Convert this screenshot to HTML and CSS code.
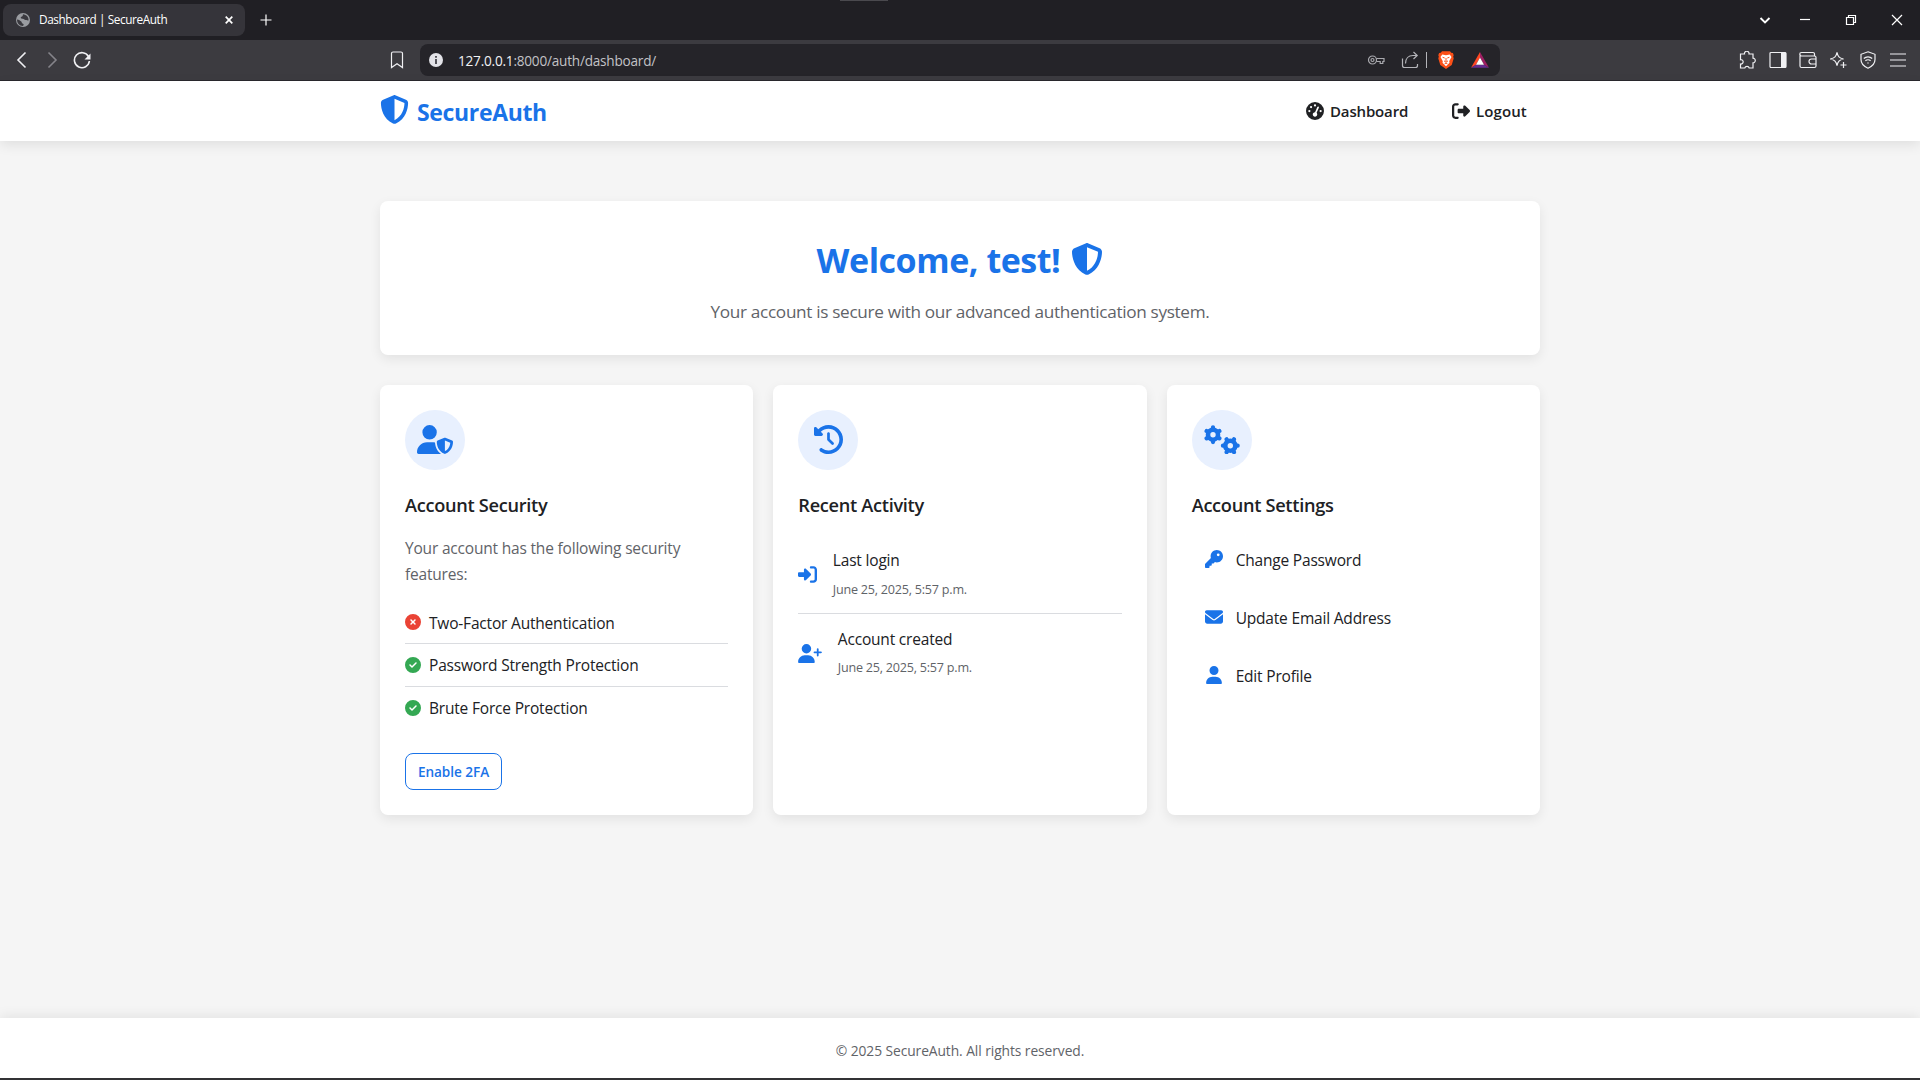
FILE: index.html
```html
<!DOCTYPE html>
<html lang="en">
<head>
<meta charset="utf-8">
<title>Dashboard | SecureAuth</title>
<link rel="stylesheet" href="styles.css">
</head>
<body>
<svg class="sprite" aria-hidden="true">
  <symbol id="shield" viewBox="0 0 512 512"><path d="M256 0c4.600 0 9.200 1 13.400 2.900L457.700 82.800c22 9.300 38.400 31 38.300 57.200c-.5 99.200-41.300 280.700-213.600 363.200c-16.700 8-36.100 8-52.800 0C57.300 420.700 16.500 239.200 16 140c-.1-26.200 16.300-47.900 38.300-57.200L242.700 2.900C246.800 1 251.400 0 256 0zm0 66.800V444.800C394 378 431.100 230.100 432 141.400L256 66.800z"/></symbol>
  <symbol id="gauge" viewBox="0 0 512 512"><path d="M0 256a256 256 0 1 1 512 0A256 256 0 1 1 0 256zM288 96a32 32 0 1 0 -64 0 32 32 0 1 0 64 0zM256 416c35.300 0 64-28.700 64-64c0-17.400-6.900-33.100-18.100-44.600L366 161.700c5.300-12.100-.2-26.300-12.300-31.600s-26.300 .2-31.600 12.300L257.900 288c-.6 0-1.300 0-1.900 0c-35.300 0-64 28.700-64 64s28.700 64 64 64zM176 144a32 32 0 1 0 -64 0 32 32 0 1 0 64 0zM96 288a32 32 0 1 0 0-64 32 32 0 1 0 0 64zm352-32a32 32 0 1 0 -64 0 32 32 0 1 0 64 0z"/></symbol>
  <symbol id="logout" viewBox="0 0 512 512"><path d="M377.900 105.900L500.700 228.700c7.200 7.200 11.300 17.100 11.300 27.300s-4.100 20.100-11.300 27.300L377.900 406.100c-6.400 6.400-15 9.900-24 9.900c-18.700 0-33.900-15.200-33.900-33.900l0-62.100-128 0c-17.700 0-32-14.300-32-32l0-64c0-17.700 14.300-32 32-32l128 0 0-62.100c0-18.700 15.200-33.900 33.900-33.900c9 0 17.600 3.600 24 9.900zM160 96L96 96c-17.700 0-32 14.300-32 32l0 256c0 17.700 14.300 32 32 32l64 0c17.700 0 32 14.300 32 32s-14.300 32-32 32l-64 0c-53 0-96-43-96-96L0 128C0 75 43 32 96 32l64 0c17.700 0 32 14.300 32 32s-14.300 32-32 32z"/></symbol>
  <symbol id="login" viewBox="0 0 512 512"><path d="M217.900 105.900L340.700 228.700c7.200 7.200 11.300 17.100 11.300 27.300s-4.100 20.100-11.300 27.300L217.900 406.100c-6.400 6.400-15 9.900-24 9.900c-18.700 0-33.900-15.200-33.900-33.900l0-62.100L32 320c-17.700 0-32-14.300-32-32l0-64c0-17.700 14.300-32 32-32l128 0 0-62.100c0-18.700 15.200-33.900 33.900-33.900c9 0 17.600 3.600 24 9.900zM352 416l64 0c17.700 0 32-14.300 32-32l0-256c0-17.700-14.300-32-32-32l-64 0c-17.700 0-32-14.300-32-32s14.300-32 32-32l64 0c53 0 96 43 96 96l0 256c0 53-43 96-96 96l-64 0c-17.700 0-32-14.300-32-32s14.300-32 32-32z"/></symbol>
  <symbol id="user-shield" viewBox="0 0 640 512"><path d="M224 256A128 128 0 1 0 224 0a128 128 0 1 0 0 256zm-45.700 48C79.800 304 0 383.800 0 482.300C0 498.700 13.300 512 29.700 512l388.600 0c1.800 0 3.500-.2 5.300-.5c-76.300-55.100-99.800-141-103.100-200.200c-16.100-4.800-33.100-7.300-50.700-7.300l-91.400 0zm308.800-78.300l-120 48C358 277.400 352 286.200 352 296c0 63.300 25.900 168.800 134.800 214.200c5.900 2.500 12.600 2.500 18.500 0C614.100 464.800 640 359.300 640 296c0-9.800-6-18.600-15.100-22.300l-120-48c-5.700-2.300-12.100-2.300-17.800 0zM591.400 312c-3.900 50.700-27.200 116.700-95.400 149.700V273.800L591.400 312z"/></symbol>
  <symbol id="history" viewBox="0 0 512 512"><path d="M75 75L41 41C25.900 25.900 0 36.600 0 57.900V168c0 13.300 10.700 24 24 24H134.100c21.400 0 32.100-25.900 17-41l-30.800-30.800C155 85.500 203 64 256 64c106 0 192 86 192 192s-86 192-192 192c-40.800 0-78.600-12.700-109.700-34.400c-14.500-10.100-34.400-6.600-44.600 7.900s-6.600 34.400 7.900 44.600C151.200 495 201.700 512 256 512c141.400 0 256-114.600 256-256S397.400 0 256 0C185.300 0 121.300 28.700 75 75zm181 53c-13.300 0-24 10.700-24 24V256c0 6.400 2.500 12.500 7 17l72 72c9.400 9.400 24.600 9.400 33.900 0s9.400-24.600 0-33.900l-65-65V152c0-13.300-10.700-24-24-24z"/></symbol>
  <symbol id="gears" viewBox="0 0 36 28.800">
    <g fill="none" stroke="currentColor" stroke-width="4.600">
      <circle cx="9" cy="9.600" r="5"/>
      <circle cx="26.300" cy="20.600" r="5"/>
      <path stroke-width="4.200" stroke-linecap="round" d="M9 3.400V2.200M9 15.800V17M14.400 6.500l1-.6M3.600 12.700l-1 .6M14.400 12.700l1 .6M3.600 6.500l-1-.6M32.500 20.600h1.200M20.100 20.600h-1.200M29.400 15.200l.6-1M23.200 26l-.6 1M29.400 26l.6 1M23.200 15.200l-.6-1"/>
    </g>
  </symbol>
  <symbol id="user-plus" viewBox="0 0 640 512"><path d="M96 128a128 128 0 1 1 256 0A128 128 0 1 1 96 128zM0 482.300C0 383.800 79.800 304 178.300 304h91.400C368.200 304 448 383.800 448 482.300c0 16.400-13.300 29.700-29.700 29.700H29.700C13.300 512 0 498.700 0 482.300zM504 312V248H440c-13.300 0-24-10.700-24-24s10.700-24 24-24h64V136c0-13.300 10.700-24 24-24s24 10.700 24 24v64h64c13.300 0 24 10.700 24 24s-10.700 24-24 24H552v64c0 13.300-10.700 24-24 24s-24-10.700-24-24z"/></symbol>
  <symbol id="key" viewBox="0 0 512 512"><path d="M336 352c97.200 0 176-78.800 176-176S433.200 0 336 0S160 78.800 160 176c0 18.700 2.900 36.800 8.300 53.700L7 391c-4.500 4.500-7 10.600-7 17v80c0 13.300 10.700 24 24 24h80c13.300 0 24-10.700 24-24V448h40c13.300 0 24-10.700 24-24V384h40c6.400 0 12.500-2.500 17-7l33.300-33.300c16.900 5.400 35 8.300 53.700 8.300zM376 96a40 40 0 1 1 0 80 40 40 0 1 1 0-80z"/></symbol>
  <symbol id="envelope" viewBox="0 0 512 512"><path d="M48 64C21.500 64 0 85.500 0 112c0 15.100 7.100 29.300 19.200 38.400L236.800 313.600c11.400 8.500 27 8.500 38.400 0L492.800 150.400c12.100-9.100 19.200-23.300 19.200-38.400c0-26.500-21.500-48-48-48H48zM0 176V384c0 35.300 28.700 64 64 64H448c35.300 0 64-28.700 64-64V176L294.400 339.200c-22.800 17.100-54 17.100-76.800 0L0 176z"/></symbol>
  <symbol id="user" viewBox="0 0 448 512"><path d="M224 256A128 128 0 1 0 224 0a128 128 0 1 0 0 256zm-45.700 48C79.800 304 0 383.800 0 482.300C0 498.700 13.300 512 29.700 512H418.300c16.400 0 29.700-13.300 29.700-29.700C448 383.800 368.200 304 269.700 304H178.300z"/></symbol>
  <symbol id="check" viewBox="0 0 512 512"><path d="M256 512A256 256 0 1 0 256 0a256 256 0 1 0 0 512zM369 209L241 337c-9.400 9.400-24.600 9.400-33.900 0l-64-64c-9.400-9.400-9.400-24.600 0-33.900s24.600-9.400 33.900 0l47 47L335 175c9.400-9.400 24.600-9.400 33.900 0s9.400 24.600 0 33.900z"/></symbol>
  <symbol id="cross" viewBox="0 0 512 512"><path d="M256 512A256 256 0 1 0 256 0a256 256 0 1 0 0 512zM175 175c9.400-9.400 24.600-9.400 33.900 0l47 47 47-47c9.400-9.400 24.600-9.400 33.900 0s9.400 24.600 0 33.900l-47 47 47 47c9.400 9.400 9.400 24.600 0 33.900s-24.600 9.400-33.900 0l-47-47-47 47c-9.400 9.400-24.600 9.400-33.900 0s-9.400-24.600 0-33.900l47-47-47-47c-9.400-9.400-9.400-24.600 0-33.900z"/></symbol>
</svg>

<div class="tabbar">
  <div class="tab">
    <svg class="favicon" viewBox="0 0 14 14"><circle cx="7" cy="7" r="7" fill="#9a9ca1"/><path d="M1 6.500c2 0 2.500 1 3.500 1.500 1.500.5 1 2 2 2.500 1.500.5 1.500 1 .5 2.500-4 0-6-3-6-6.500zM7 1.300c-.5 1.500 0 2-1.500 2.500s-.5 2 1 2c1.500-.3 1.500 1.200 3 1.200s2 .5 3 .5c.5-3-2-6-5.500-6.200z" fill="#3a393f"/></svg>
    <span class="tab-title">Dashboard | SecureAuth</span>
    <svg class="tab-close" viewBox="0 0 8 8"><path d="M.7.700l6.600 6.600M7.300.700L.7 7.300"/></svg>
  </div>
  <svg class="new-tab" viewBox="0 0 12 12"><path d="M6 .5v11M.5 6h11"/></svg>
  <div class="window-controls">
    <svg viewBox="0 0 12 12"><path stroke-width="1.900" d="M1.500 4L6 8.500 10.500 4"/></svg>
    <svg viewBox="0 0 12 12"><path d="M1 5.500h10"/></svg>
    <svg viewBox="0 0 12 12"><path d="M1.500 3.500h7v7h-7zM3.500 3.500v-2h7v7h-2"/></svg>
    <svg viewBox="0 0 12 12"><path d="M1 1l10 10M11 1L1 11"/></svg>
  </div>
  <div class="top-handle"></div>
</div>

<div class="toolbar">
  <div class="nav-buttons">
    <svg viewBox="0 0 18 18"><path d="M12.500 1.500L5 9l7.500 7.500"/></svg>
    <svg class="disabled" viewBox="0 0 18 18"><path d="M5.500 1.500L13 9l-7.500 7.500"/></svg>
    <svg viewBox="0 0 18 18"><path d="M15.500 5.500A7.500 7.500 0 1 0 16.400 10"/><path class="solid" d="M17.500 2.500v6h-6z"/></svg>
  </div>
  <svg class="bookmark" viewBox="0 0 14 18"><path d="M1.500 2.500a1.500 1.500 0 0 1 1.500-1.500h8a1.500 1.500 0 0 1 1.500 1.500V16.500L7 12.800 1.500 16.500z"/></svg>
  <div class="address">
    <svg class="info" viewBox="0 0 14 14"><circle cx="7" cy="7" r="7" fill="#e3e3e8"/><path d="M7 3v1.800M7 6v5" stroke="#3a3940" stroke-width="1.700" fill="none"/></svg>
    <span class="url"><b>127.0.0.1</b>:8000/auth/dashboard/</span>
    <div class="address-icons">
      <svg viewBox="0 0 18 18"><g stroke="#a9a9ae"><circle cx="5.500" cy="9" r="4"/><circle cx="5.500" cy="9" r="1.500"/><path d="M9.300 7.500H17v3h-1.200v2h-2.600v-2H9.300"/></g></svg>
      <svg viewBox="0 0 18 18"><g stroke="#b4b4b9"><path d="M1.500 7.500v7a2 2 0 0 0 2 2h11a2 2 0 0 0 2-2v-1.500"/><path d="M4.500 12.500c0-5 3-8 7.500-8h4M12.500 1l3.700 3.500-3.700 3.500"/></g></svg>
      <i class="divider"></i>
      <svg viewBox="0 0 18 18"><path d="M5 .3h8l1.200 1.500 1.700.3.800 2.200-.5 1.200.5 2-2 6.500L9 18l-5.700-4-2-6.500.5-2-.5-1.200.8-2.200 1.700-.3z" fill="#fb5018" stroke="none"/><path d="M5.300 3.500L9 4.200l3.700-.7 1.800 2.500-2.300 4.200.3 1.600L9 15.300l-3.500-3.500.3-1.600L3.500 6z" fill="#fff" stroke="none"/><path d="M5.600 6.300l2.100.7M12.400 6.300l-2.100.7M9 7v3.500M7 9.800l2 1.500 2-1.500M7.600 12.800l1.400-.7 1.400.7" stroke="#fb5018" stroke-width="1"/></svg>
      <svg viewBox="0 0 18 18"><path d="M9 1L0 16.700l5-3L9 6.500z" fill="#ff4724" stroke="none"/><path d="M9 1l9 15.700-5-3L9 6.500z" fill="#9e1f63" stroke="none"/><path d="M0 16.700h18l-5-3H5z" fill="#662d91" stroke="none"/><path d="M9 6.500L5 13.700h8z" fill="#fff" stroke="none"/></svg>
    </div>
  </div>
  <div class="extensions">
    <svg viewBox="0 0 18 18"><path d="M1.500 3h4a2.300 2.300 0 1 1 4.500 0h4v4.200a2.300 2.300 0 1 1 0 4.600V17h-3.800a2.300 2.300 0 0 0-4.400 0H1.500v-4a2.200 2.200 0 1 0 0-4.300z"/></svg>
    <svg viewBox="0 0 18 18"><rect x="1" y="1.500" width="16" height="15" rx="1"/><path class="solid" d="M12 1.500h5v15h-5z"/></svg>
    <svg viewBox="0 0 18 18"><path d="M15.500 5V3a1.500 1.500 0 0 0-1.500-1.500H2.500a1.500 1.500 0 0 0 0 3.500h13a1.500 1.500 0 0 1 1.500 1.500v8.500a1.500 1.500 0 0 1-1.500 1.500H2.500A1.500 1.500 0 0 1 1 15V3M17 8h-4.500a2.500 2.500 0 0 0 0 5H17z"/></svg>
    <svg viewBox="0 0 18 18"><path d="M8 1.300c.8 4.200 2.200 5.700 6.500 6.700-4.300 1-5.700 2.500-6.500 6.700C7.200 10.500 5.800 9 1.200 8 5.800 7 7.200 5.500 8 1.300z"/><path d="M14.500 11v6M11.500 14h6"/></svg>
    <svg viewBox="0 0 18 18"><path d="M9 .8l7 2.500v5.200c0 4.200-3 7-7 8.700-4-1.700-7-4.500-7-8.700V3.300z"/><path d="M4.800 7.500a6 6 0 0 1 8.400 0M6.400 9.800a3.700 3.700 0 0 1 5.200 0M8.300 12h1.400"/></svg>
    <svg viewBox="0 0 18 18"><path d="M1 3h16M1 9h16M1 15h16"/></svg>
  </div>
</div>

<header class="site-header">
  <div class="container header-row">
    <div class="logo"><svg><use href="#shield"/></svg><span>SecureAuth</span></div>
    <nav>
      <a class="dash-link"><svg><use href="#gauge"/></svg><span>Dashboard</span></a>
      <a class="logout-link"><svg><use href="#logout"/></svg><span>Logout</span></a>
    </nav>
  </div>
</header>

<main class="container">
  <section class="card welcome">
    <h1><span>Welcome, test!</span><svg><use href="#shield"/></svg></h1>
    <p><span>Your account is secure with our advanced authentication system.</span></p>
  </section>
  <div class="grid">
    <section class="card">
      <div class="badge"><svg><use href="#user-shield"/></svg></div>
      <h3><span>Account Security</span></h3>
      <p class="intro">Your account has the following security features:</p>
      <ul class="features">
        <li><svg class="bad"><use href="#cross"/></svg><span>Two-Factor Authentication</span></li>
        <li><svg class="good"><use href="#check"/></svg><span>Password Strength Protection</span></li>
        <li><svg class="good"><use href="#check"/></svg><span>Brute Force Protection</span></li>
      </ul>
      <a class="button"><span>Enable 2FA</span></a>
    </section>
    <section class="card">
      <div class="badge history"><svg><use href="#history"/></svg></div>
      <h3><span>Recent Activity</span></h3>
      <ul class="activity">
        <li><svg class="login"><use href="#login"/></svg><div><p>Last login</p><small>June 25, 2025, 5:57 p.m.</small></div></li>
        <li><svg class="created"><use href="#user-plus"/></svg><div><p>Account created</p><small>June 25, 2025, 5:57 p.m.</small></div></li>
      </ul>
    </section>
    <section class="card">
      <div class="badge"><svg><use href="#gears"/></svg></div>
      <h3><span>Account Settings</span></h3>
      <ul class="settings">
        <li><svg><use href="#key"/></svg><span>Change Password</span></li>
        <li><svg><use href="#envelope"/></svg><span>Update Email Address</span></li>
        <li><svg><use href="#user"/></svg><span>Edit Profile</span></li>
      </ul>
    </section>
  </div>
</main>

<footer><span>© 2025 SecureAuth. All rights reserved.</span></footer>
<div class="bottom-edge"></div>
</body>
</html>
```
FILE: styles.css
```css
* { box-sizing: border-box; margin: 0; padding: 0; }

body {
  width: 1920px;
  height: 1080px;
  overflow: hidden;
  display: flex;
  flex-direction: column;
  background: #f5f5f5;
  color: #202124;
  font-family: "Open Sans", "Noto Sans", sans-serif;
  font-size: 15.5px;
  letter-spacing: -0.19px;
  line-height: 25.6px;
}

ul { list-style: none; }
svg { display: block; flex: none; fill: currentColor; }
.sprite { position: absolute; width: 0; height: 0; }

/* Browser window */
.tabbar {
  position: relative;
  display: flex;
  align-items: center;
  height: 40px;
  flex: none;
  padding-left: 3px;
  background: #201f24;
  color: #fff;
}
.tabbar svg, .toolbar svg { fill: none; stroke: currentColor; stroke-width: 1.2; }
.tab {
  display: flex;
  align-items: center;
  width: 242px;
  height: 32px;
  padding: 0 12px 0 13px;
  border-radius: 8px;
  background: #35343a;
}
.tabbar .favicon { width: 14px; height: 14px; stroke: none; }
.tab-title { margin-left: 9px; font-size: 11.8px; letter-spacing: -0.4px; white-space: nowrap; }
.tabbar .tab-close { width: 8px; height: 8px; margin-left: auto; stroke-width: 1.7; }
.new-tab { width: 12px; height: 12px; margin-left: 15px; }
.window-controls { display: flex; gap: 34px; margin-left: auto; padding-right: 17px; }
.window-controls svg { width: 12px; height: 12px; }
.window-controls svg:first-child { margin-right: -6px; }
.top-handle { position: absolute; left: 840px; top: 0; width: 48px; height: 1px; background: #4a494e; }

.toolbar {
  display: flex;
  align-items: center;
  height: 41px;
  flex: none;
  padding: 0 13px;
  background: #3c3b40;
  border-bottom: 1px solid #29282d;
  color: #f0f0f3;
}
.toolbar .solid { fill: currentColor; stroke: none; }
.nav-buttons { display: flex; gap: 12px; }
.nav-buttons svg, .address-icons svg, .extensions svg { width: 18px; height: 18px; }
.nav-buttons svg { stroke-width: 1.6; }
.nav-buttons .disabled { color: #85848a; }
.bookmark { width: 14px; height: 18px; margin-left: 299px; }
.address {
  display: flex;
  align-items: center;
  width: 1080px;
  height: 32px;
  margin-left: 16px;
  padding: 0 11px 0 9px;
  border-radius: 8px;
  background: #252429;
}
.toolbar .info { width: 14px; height: 14px; stroke: none; }
.url { margin-left: 15px; padding-top: 1px; font-size: 13.6px; letter-spacing: -0.22px; color: #c2c2c6; }
.url b { font-weight: 400; color: #f2f2f4; }
.address-icons { display: flex; align-items: center; margin-left: auto; }
.divider { width: 1px; height: 16px; margin: 0 10px 0 7px; background: #b4b4b9; }
.address-icons svg:nth-child(2) { margin-left: 16px; }
.address-icons svg:last-child { margin-left: 16px; }
.extensions { display: flex; gap: 12px; margin-left: auto; }

/* Site header */
.container { width: 1160px; margin: 0 auto; }
.site-header {
  position: relative;
  height: 60px;
  flex: none;
  background: #fff;
  box-shadow: 0 4px 12px rgba(0, 0, 0, .09);
}
.header-row { display: flex; align-items: center; justify-content: space-between; height: 60px; }
.logo { display: flex; padding-top: 2px; color: #1a73e8; font-size: 23px; font-weight: 700; letter-spacing: -0.35px; }
.logo svg { width: 29px; height: 29px; margin-top: -2px; }
.logo span { margin-left: 8px; line-height: 29px; margin-top: 1px; }
nav { display: flex; gap: 44px; padding-right: 12px; font-size: 15px; font-weight: 600; letter-spacing: -0.15px; }
nav a { display: flex; align-items: center; }
nav svg { width: 18px; height: 18px; margin-top: -1px; }
nav span { margin-left: 6px; padding-top: 1px; }
.dash-link span { width: 78px; }
.logout-link { letter-spacing: 0.1px; }
.logout-link span { width: 52px; }

/* Cards */
main { flex: 1; padding-top: 60px; }
.card {
  border-radius: 8px;
  background: #fff;
  box-shadow: 0 4px 12px rgba(0, 0, 0, .08);
}
.welcome { height: 154px; padding: 30px; text-align: center; }
h1 {
  display: flex;
  align-items: center;
  justify-content: center;
  gap: 11px;
  color: #1a73e8;
  font-size: 34px;
  letter-spacing: -0.45px;
  line-height: 56px;
}
h1 span { padding-top: 1px; margin-bottom: -1px; }
h1 svg { width: 32px; height: 32px; }
.welcome p { margin-top: 11px; color: #5f6368; font-size: 17.2px; letter-spacing: -0.33px; line-height: 28px; }
.grid { display: grid; grid-template-columns: repeat(3, 1fr); gap: 20px; margin-top: 30px; }
.grid .card { height: 430px; padding: 25px; }
.badge {
  display: grid;
  place-items: center;
  width: 60px;
  height: 60px;
  padding-bottom: 2px;
  border-radius: 50%;
  background: #e8f0fe;
  color: #1a73e8;
}
.badge svg { width: 36px; height: 29px; }
.badge.history svg { width: 29px; }
h3 { margin: 20px 0 15px; font-size: 18.2px; letter-spacing: -0.3px; line-height: 31px; font-weight: 600; }
.intro { margin-bottom: 14px; color: #5f6368; }
.features { margin-bottom: 24px; }
.features li { display: flex; align-items: center; gap: 8px; height: 43px; padding-top: 2px; border-bottom: 1px solid #dadce0; }
.features li:last-child { height: 42px; border: 0; }
.features svg { width: 16px; height: 16px; margin-top: -2px; }
.features li:first-child span { padding-top: 1px; }
.bad { color: #ea4335; }
.good { color: #34a853; }
.button {
  display: flex;
  align-items: center;
  justify-content: center;
  width: 97px;
  height: 37px;
  padding-top: 1px;
  border: 1px solid #1a73e8;
  border-radius: 8px;
  color: #1a73e8;
  font-size: 13.6px;
  font-weight: 600;
  letter-spacing: -0.05px;
}
.activity li { display: flex; align-items: center; gap: 15.500px; height: 79px; padding: 0 0 1px; }
.activity li:first-child { height: 78px; padding: 0; border-bottom: 1px solid #dadce0; }
.activity svg { color: #1a73e8; height: 19px; }
.activity .login { width: 19px; }
.activity .created { width: 24px; }
.activity small { display: block; margin-top: 5px; color: #5f6368; font-size: 12.6px; letter-spacing: -0.23px; line-height: 22px; }
.settings { display: grid; gap: 10px; }
.settings li { display: flex; align-items: center; gap: 13px; height: 48px; padding: 0 13px; }
.settings svg { width: 18px; height: 18px; margin-top: -2px; color: #1a73e8; }
.settings span { padding-top: 1px; }

footer {
  display: flex;
  align-items: center;
  justify-content: center;
  height: 60px;
  flex: none;
  padding-top: 5px;
  background: #fff;
  box-shadow: 0 -2px 12px rgba(0, 0, 0, .08);
  color: #5f6368;
  font-size: 13.8px;
  letter-spacing: -0.07px;
}
.bottom-edge { height: 2px; flex: none; background: #333235; }
```
